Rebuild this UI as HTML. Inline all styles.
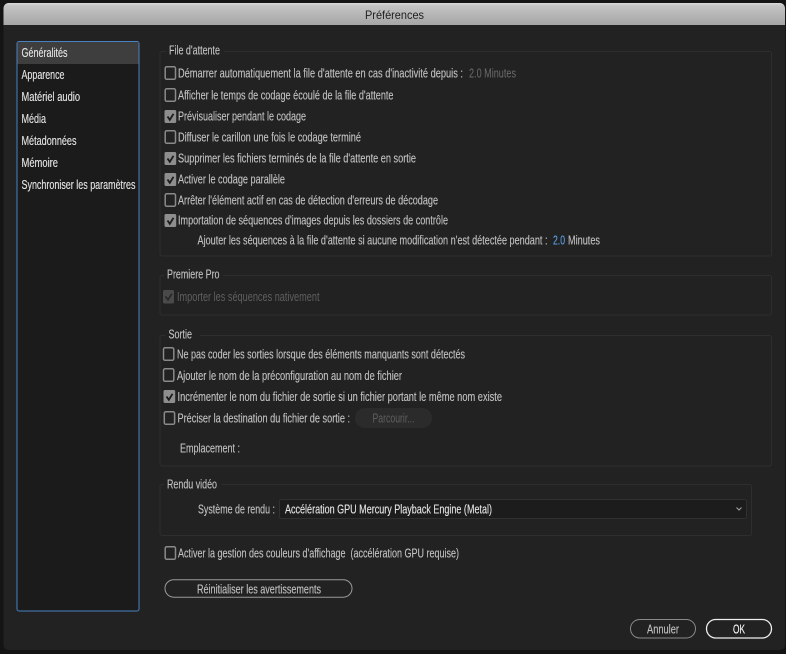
<!DOCTYPE html>
<html lang="fr"><head><meta charset="utf-8"><title>Préférences</title>
<style>
html,body{margin:0;padding:0;background:#141414;width:786px;height:654px;overflow:hidden}
svg{display:block;position:absolute;left:0;top:0}
text{font-family:"Liberation Sans",sans-serif;font-size:12.5px;fill:#c2c2c2;stroke:#c2c2c2;stroke-width:.12px}
.w{fill:#e6e6e6;stroke:#e6e6e6}.d{fill:#5f5f5f;stroke:none}.g{fill:#6b6b6b;stroke:none}.b{fill:#5ba0e6;stroke:#5ba0e6}
.box{fill:none;stroke:#2e2e2e;stroke-width:1}
.cb{fill:none;stroke:#8a8a8a;stroke-width:1.5}
.cc{fill:#8e8e8e}
.ck{fill:none;stroke:#1c1c1c;stroke-width:1.8}
</style></head><body>
<svg width="786" height="654" viewBox="0 0 786 654" xmlns="http://www.w3.org/2000/svg">
<defs><linearGradient id="t" x1="0" y1="0" x2="0" y2="1"><stop offset="0" stop-color="#dcdcdc"/><stop offset=".12" stop-color="#c4c4c4"/><stop offset="1" stop-color="#a6a6a6"/></linearGradient></defs>
<rect x="3.500" y="3" width="781.500" height="647" rx="5" fill="#222"/>
<path d="M3.500 25V8a5 5 0 0 1 5-5H780a5 5 0 0 1 5 5V25Z" fill="url(#t)"/>
<text x="365" y="19" textLength="59" lengthAdjust="spacingAndGlyphs" style="font-size:12px;fill:#1e1e1e;stroke:none">Préférences</text>

<rect x="17" y="41.500" width="122" height="569.500" rx="2" fill="#1b1b1b" stroke="#4a80c0" stroke-width="1"/>
<rect x="17.500" y="42" width="121" height="22" fill="#3e3e3e"/>
<text class="w" x="21.500" y="57" textLength="46" lengthAdjust="spacingAndGlyphs">Généralités</text>
<text class="w" x="21.500" y="79" textLength="43" lengthAdjust="spacingAndGlyphs">Apparence</text>
<text class="w" x="21.500" y="101" textLength="58.500" lengthAdjust="spacingAndGlyphs">Matériel audio</text>
<text class="w" x="21.500" y="123" textLength="24.500" lengthAdjust="spacingAndGlyphs">Média</text>
<text class="w" x="21.500" y="145" textLength="55" lengthAdjust="spacingAndGlyphs">Métadonnées</text>
<text class="w" x="21.500" y="167" textLength="36.500" lengthAdjust="spacingAndGlyphs">Mémoire</text>
<text class="w" x="21.500" y="189" textLength="114" lengthAdjust="spacingAndGlyphs">Synchroniser les paramètres</text>

<!-- File d'attente -->
<path class="box" d="M166 51.500H162a2 2 0 0 0-2 2V254a2 2 0 0 0 2 2H769.500a2 2 0 0 0 2-2V53.500a2 2 0 0 0-2-2H224"/>
<text x="169" y="54.500" textLength="51" lengthAdjust="spacingAndGlyphs">File d'attente</text>

<rect class="cb" x="165.200" y="66.800" width="10.300" height="12.500" rx="1.500"/>
<text x="178" y="77.500" textLength="285" lengthAdjust="spacingAndGlyphs">Démarrer automatiquement la file d'attente en cas d'inactivité depuis :</text>
<text class="g" x="469" y="77.500" textLength="47" lengthAdjust="spacingAndGlyphs">2.0 Minutes</text>

<rect class="cb" x="165.200" y="88.800" width="10.300" height="12.500" rx="1.500"/>
<text x="178" y="99.500" textLength="215.500" lengthAdjust="spacingAndGlyphs">Afficher le temps de codage écoulé de la file d'attente</text>

<rect class="cc" x="164.500" y="110" width="11.700" height="13" rx="1.500"/>
<path class="ck" d="M167.500 116.500l2.300 3.300 3.700-6"/>
<text x="178" y="120.500" textLength="128" lengthAdjust="spacingAndGlyphs">Prévisualiser pendant le codage</text>

<rect class="cb" x="165.200" y="130.800" width="10.300" height="12.500" rx="1.500"/>
<text x="178" y="141.500" textLength="183" lengthAdjust="spacingAndGlyphs">Diffuser le carillon une fois le codage terminé</text>

<rect class="cc" x="164.500" y="152" width="11.700" height="13" rx="1.500"/>
<path class="ck" d="M167.500 158.500l2.300 3.300 3.700-6"/>
<text x="178" y="162.500" textLength="238" lengthAdjust="spacingAndGlyphs">Supprimer les fichiers terminés de la file d'attente en sortie</text>

<rect class="cc" x="164.500" y="173" width="11.700" height="13" rx="1.500"/>
<path class="ck" d="M167.500 179.500l2.300 3.300 3.700-6"/>
<text x="178" y="183.500" textLength="107" lengthAdjust="spacingAndGlyphs">Activer le codage parallèle</text>

<rect class="cb" x="165.200" y="193.800" width="10.300" height="12.500" rx="1.500"/>
<text x="178" y="204.500" textLength="260" lengthAdjust="spacingAndGlyphs">Arrêter l'élément actif en cas de détection d'erreurs de décodage</text>

<rect class="cc" x="164.500" y="214" width="11.700" height="13" rx="1.500"/>
<path class="ck" d="M167.500 220.500l2.300 3.300 3.700-6"/>
<text x="178" y="224.500" textLength="270" lengthAdjust="spacingAndGlyphs">Importation de séquences d'images depuis les dossiers de contrôle</text>

<text x="197.500" y="244.500" textLength="350" lengthAdjust="spacingAndGlyphs">Ajouter les séquences à la file d'attente si aucune modification n'est détectée pendant :</text>
<text class="b" x="553" y="244.500" textLength="12" lengthAdjust="spacingAndGlyphs">2.0</text>
<text x="568" y="244.500" textLength="32" lengthAdjust="spacingAndGlyphs">Minutes</text>

<!-- Premiere Pro -->
<path class="box" d="M164 275.500H162a2 2 0 0 0-2 2V313a2 2 0 0 0 2 2H769.500a2 2 0 0 0 2-2V277.500a2 2 0 0 0-2-2H223"/>
<text x="167" y="278.500" textLength="52.500" lengthAdjust="spacingAndGlyphs">Premiere Pro</text>
<rect x="163" y="290" width="11" height="13.500" rx="1.500" fill="#4a4a4a"/>
<path d="M165.500 296.500l2.500 3.300 3.800-6" fill="none" stroke="#272727" stroke-width="1.700"/>
<text class="d" x="177" y="301" textLength="142.500" lengthAdjust="spacingAndGlyphs">Importer les séquences nativement</text>

<!-- Sortie -->
<path class="box" d="M165 335.500H162a2 2 0 0 0-2 2V464a2 2 0 0 0 2 2H769.500a2 2 0 0 0 2-2V337.500a2 2 0 0 0-2-2H200"/>
<text x="168.500" y="338.500" textLength="23.500" lengthAdjust="spacingAndGlyphs">Sortie</text>

<rect class="cb" x="163.500" y="347.800" width="10.300" height="12.500" rx="1.500"/>
<text x="177" y="358.500" textLength="288" lengthAdjust="spacingAndGlyphs">Ne pas coder les sorties lorsque des éléments manquants sont détectés</text>

<rect class="cb" x="163.500" y="368.800" width="10.300" height="12.500" rx="1.500"/>
<text x="177" y="380" textLength="225" lengthAdjust="spacingAndGlyphs">Ajouter le nom de la préconfiguration au nom de fichier</text>

<rect class="cc" x="163.500" y="390" width="11.700" height="13" rx="1.500"/>
<path class="ck" d="M166.500 396.500l2.300 3.300 3.700-6"/>
<text x="177.500" y="401" textLength="324.500" lengthAdjust="spacingAndGlyphs">Incrémenter le nom du fichier de sortie si un fichier portant le même nom existe</text>

<rect class="cb" x="164.300" y="411.800" width="10.300" height="12.500" rx="1.500"/>
<text x="177.500" y="422.500" textLength="172.500" lengthAdjust="spacingAndGlyphs">Préciser la destination du fichier de sortie :</text>
<rect x="355" y="408" width="77" height="20" rx="10" fill="#2b2b2b"/>
<text class="d" x="372.500" y="422.500" textLength="42" lengthAdjust="spacingAndGlyphs">Parcourir...</text>

<text x="180" y="452.500" textLength="60" lengthAdjust="spacingAndGlyphs">Emplacement :</text>

<!-- Rendu vidéo -->
<path class="box" d="M164 484.500H162a2 2 0 0 0-2 2V533.500a2 2 0 0 0 2 2H749.500a2 2 0 0 0 2-2V486.500a2 2 0 0 0-2-2H221"/>
<text x="167" y="488.500" textLength="50" lengthAdjust="spacingAndGlyphs">Rendu vidéo</text>
<text x="198" y="513.500" textLength="77" lengthAdjust="spacingAndGlyphs">Système de rendu :</text>
<rect x="279.500" y="499.500" width="467" height="19" rx="2" fill="#1c1c1c" stroke="#303030"/>
<text class="w" x="285" y="513.500" textLength="207" lengthAdjust="spacingAndGlyphs">Accélération GPU Mercury Playback Engine (Metal)</text>
<path d="M736.500 507.500l2.500 2.500 2.500-2.500" fill="none" stroke="#a8a8a8" stroke-width="1"/>

<rect class="cb" x="165.200" y="546.800" width="10.300" height="12.500" rx="1.500"/>
<text x="178" y="557.500" textLength="281" lengthAdjust="spacingAndGlyphs">Activer la gestion des couleurs d'affichage&#160; (accélération GPU requise)</text>

<rect x="165" y="579.700" width="187" height="17.500" rx="8.700" fill="none" stroke="#9a9a9a" stroke-width="1"/>
<text x="197" y="593.500" textLength="124" lengthAdjust="spacingAndGlyphs">Réinitialiser les avertissements</text>

<rect x="630.500" y="619.500" width="65" height="18.500" rx="9.200" fill="none" stroke="#8a8a8a" stroke-width="1"/>
<text x="647" y="633.500" textLength="32" lengthAdjust="spacingAndGlyphs">Annuler</text>
<rect x="706.500" y="619.500" width="65" height="18.500" rx="9.200" fill="none" stroke="#f0f0f0" stroke-width="1.300"/>
<text class="w" x="733" y="633.500" textLength="12" lengthAdjust="spacingAndGlyphs" style="fill:#fff">OK</text>
</svg>
</body></html>
